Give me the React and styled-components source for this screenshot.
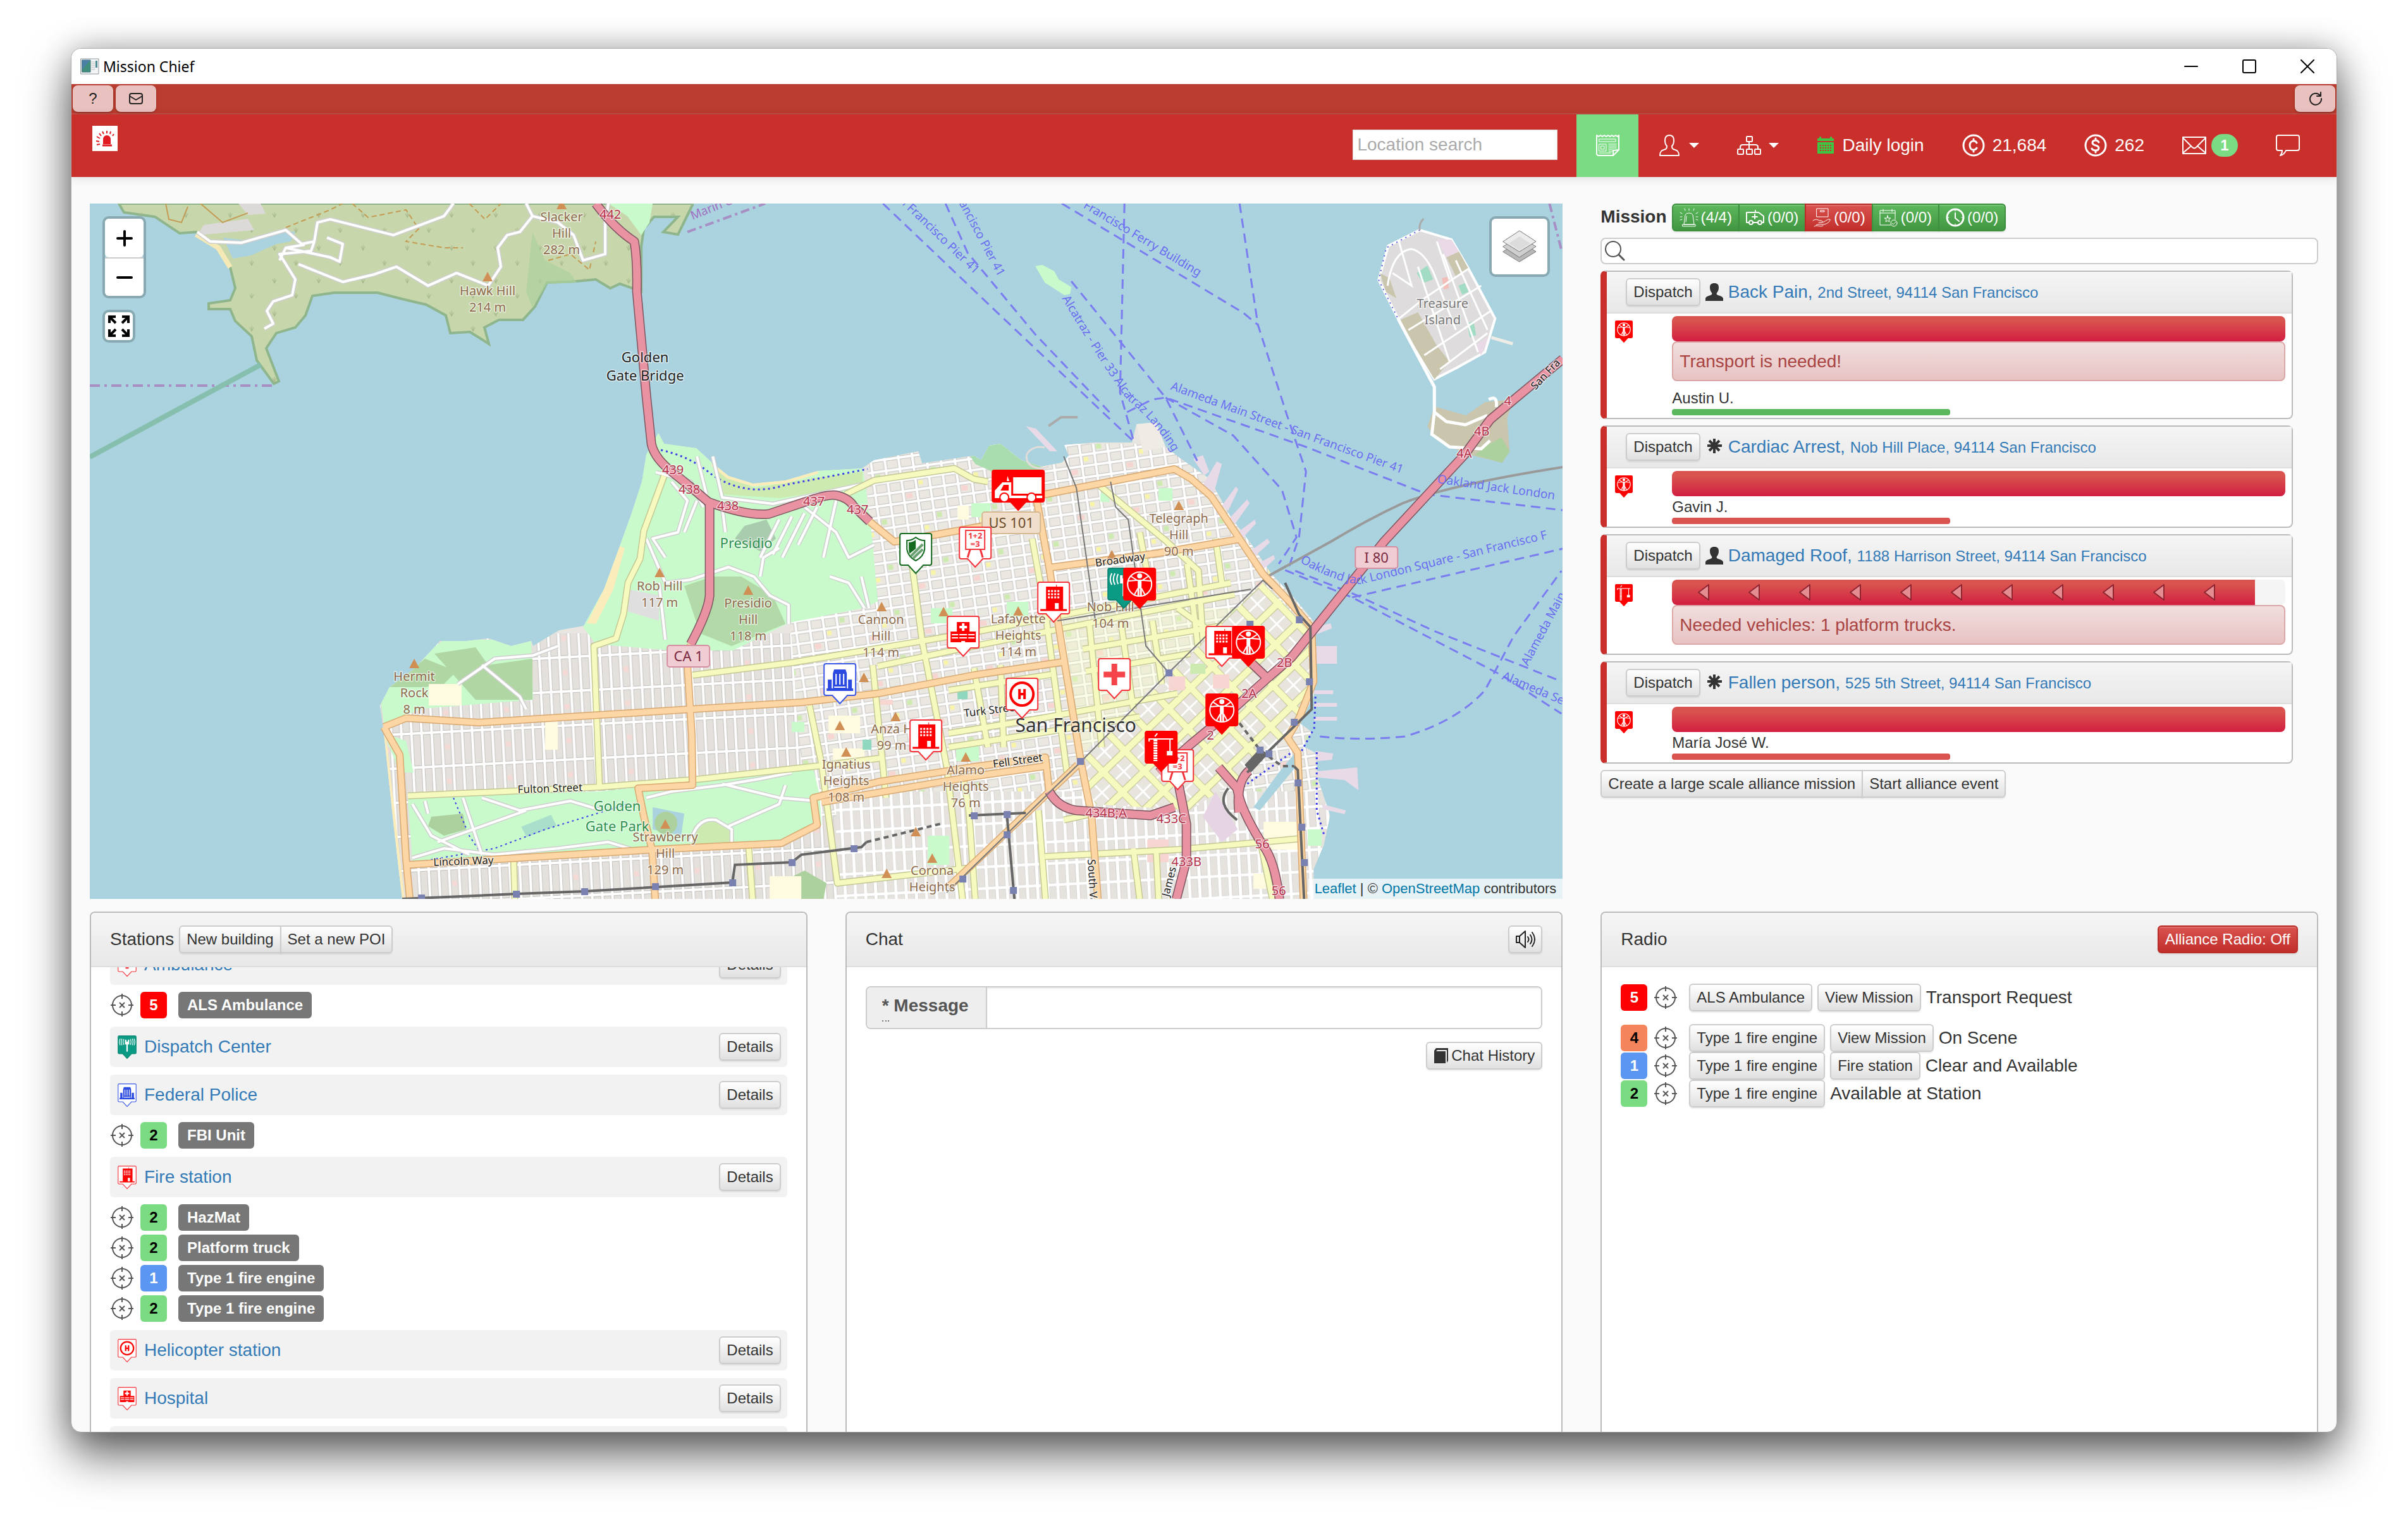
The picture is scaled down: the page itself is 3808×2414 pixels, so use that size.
import React from 'react';
import styled, { createGlobalStyle, css } from 'styled-components';

const GlobalStyle = createGlobalStyle`
  * {
    box-sizing: border-box;
  }
  body {
    margin: 0;
    background: #fff;
    color: #333;
    font-family: "Liberation Sans", Arial, sans-serif;
    font-size: 28px;
    line-height: 40px;
  }
  a {
    color: #337ab7;
    text-decoration: none;
  }
  button,
  input {
    font-family: inherit;
  }
  svg {
    display: block;
    flex: none;
  }
`;

/* ---------- window frame ---------- */

const Desktop = styled.div`
  height: 100vh;
  padding: 76px 112px 148px;
`;

const Window = styled.div`
  display: flex;
  flex-direction: column;
  height: 100%;
  overflow: hidden;
  background: #fafafa;
  border: 1px solid #aaa;
  border-radius: 16px;
  box-shadow: 0 36px 72px rgba(0, 0, 0, 0.6), 0 0 48px rgba(0, 0, 0, 0.24);
`;

const TitleBar = styled.div`
  display: flex;
  align-items: center;
  flex: none;
  height: 56px;
  padding-left: 14px;
  background: #fff;
  color: #000;
  font-family: "Noto Sans", sans-serif;
  font-size: 23px;
`;

const Title = styled.div`
  flex: 1;
  padding-left: 6px;
`;

const WindowButton = styled.button`
  display: flex;
  align-items: center;
  justify-content: center;
  width: 92px;
  height: 56px;
  padding: 0;
  border: 0;
  background: none;
`;

const Toolbar = styled.div`
  display: flex;
  flex: none;
  gap: 4px;
  height: 48px;
  padding: 2px;
  background: #ba3c2e;
  border-bottom: 2px solid #c05046;
`;

const ToolButton = styled.button`
  display: flex;
  align-items: center;
  justify-content: center;
  width: 64px;
  height: 42px;
  margin-left: ${(props) => (props.$end ? 'auto' : '0')};
  padding: 0;
  border: 0;
  border-radius: 8px;
  background: #e9c2bf;
  box-shadow: 0 1px 3px rgba(0, 0, 0, 0.3);
  color: #222;
  font-size: 24px;
`;

/* ---------- nav ---------- */

const Nav = styled.nav`
  display: flex;
  align-items: center;
  flex: none;
  height: 99px;
  padding: 0 28px 0 33px;
  background: #c9302c;
  box-shadow: 0 2px 14px rgba(0, 0, 0, 0.12);
  color: #fff;
`;

const Logo = styled.a`
  display: block;
  align-self: flex-start;
  margin: 18px auto 0 0;
`;

const LocationSearch = styled.input`
  width: 324px;
  height: 48px;
  margin: 0 30px 4px 0;
  padding: 0 6px;
  border: 1px solid #ddd;
  background: #fff;
  font-size: 28px;
  &::placeholder {
    color: #aaa;
  }
`;

const NavItem = styled.a`
  display: flex;
  align-items: center;
  gap: 12px;
  height: 100%;
  padding: 0 30px 2px;
  color: #fff;
  background: ${(props) => (props.$active ? '#7adb82' : 'none')};
`;

const Caret = styled.span`
  border-top: 8px solid #fff;
  border-left: 8px solid transparent;
  border-right: 8px solid transparent;
`;

const CountBadge = styled.span`
  min-width: 42px;
  height: 36px;
  margin-left: -4px;
  border-radius: 18px;
  background: #7adb82;
  font-size: 24px;
  font-weight: bold;
  line-height: 36px;
  text-align: center;
`;

/* ---------- shared parts ---------- */

const Main = styled.main`
  display: grid;
  grid-template-columns: repeat(3, minmax(0, 1fr));
  grid-template-rows: 1100px minmax(0, 1fr);
  flex: 1;
  min-height: 0;
  gap: 20px 60px;
  padding: 42px 29px 0;
`;

const tones = {
  plain: css`
    color: #333;
    border-color: #ccc;
    background: linear-gradient(#fff, #e0e0e0);
  `,
  green: css`
    color: #fff;
    border-color: #3e8f3e;
    background: linear-gradient(#5cb85c, #419641);
  `,
  red: css`
    color: #fff;
    border-color: #b92c28;
    background: linear-gradient(#d9534f, #c12e2a);
  `,
};

const Button = styled.button`
  display: inline-flex;
  align-items: center;
  gap: 4px;
  height: 44px;
  padding: 0 10px;
  border: 2px solid;
  border-radius: 6px;
  font-size: 24px;
  line-height: 36px;
  white-space: nowrap;
  box-shadow: inset 0 2px 0 rgba(255, 255, 255, 0.15), 0 2px 2px rgba(0, 0, 0, 0.08);
  ${(props) => tones[props.$tone || 'plain']}
`;

const ButtonGroup = styled.div`
  display: flex;
  & > button:not(:first-child) {
    margin-left: -2px;
    border-top-left-radius: 0;
    border-bottom-left-radius: 0;
  }
  & > button:not(:last-child) {
    border-top-right-radius: 0;
    border-bottom-right-radius: 0;
  }
`;

const Panel = styled.section`
  display: flex;
  flex-direction: column;
  min-height: 0;
  border: 2px solid #bbb;
  border-bottom: 0;
  border-radius: 8px 8px 0 0;
  background: #fff;
`;

const PanelHeader = styled.header`
  display: flex;
  align-items: center;
  justify-content: ${(props) => (props.$spread ? 'space-between' : 'flex-start')};
  flex: none;
  gap: 8px;
  height: 86px;
  padding: 0 30px;
  border-bottom: 2px solid #ddd;
  border-radius: 6px 6px 0 0;
  background: linear-gradient(#f5f5f5, #e8e8e8);
`;

const PanelBody = styled.div`
  flex: 1;
  min-height: 0;
  padding: 0 30px;
  overflow: hidden;
`;

const statusColors = {
  1: ['#5a96f2', '#fff'],
  2: ['#7adb82', '#000'],
  4: ['#f4845c', '#000'],
  5: ['#ff0000', '#fff'],
};

const Status = styled.span`
  width: 42px;
  height: 42px;
  border-radius: 6px;
  background: ${(props) => statusColors[props.$code][0]};
  color: ${(props) => statusColors[props.$code][1]};
  font-size: 24px;
  font-weight: bold;
  line-height: 42px;
  text-align: center;
`;

/* ---------- missions ---------- */

const Missions = styled.section`
  display: flex;
  flex-direction: column;
  gap: 10px;
`;

const MissionFilter = styled.div`
  display: flex;
  gap: 8px;
  font-weight: bold;
  line-height: 42px;
`;

const MissionSearch = styled.label`
  display: flex;
  align-items: center;
  height: 42px;
  padding-left: 4px;
  border: 2px solid #ccc;
  border-radius: 8px;
  background: #fff;
`;

const SearchInput = styled.input`
  flex: 1;
  height: 36px;
  border: 0;
  outline: 0;
  background: none;
  font-size: 24px;
`;

const MissionList = styled.div`
  display: flex;
  flex-direction: column;
  gap: 10px;
  margin-right: 40px;
`;

const Card = styled.article`
  border: 2px solid #bbb;
  border-left: 10px solid #c9302c;
  border-radius: 8px;
  background: #fff;
`;

const CardHeader = styled.header`
  display: flex;
  align-items: center;
  gap: 8px;
  height: 66px;
  padding: 0 30px;
  border-bottom: 2px solid #ddd;
  background: linear-gradient(#f5f5f5, #e8e8e8);
`;

const Address = styled.small`
  font-size: 24px;
`;

const CardBody = styled.div`
  display: grid;
  grid-template-columns: 90px minmax(0, 1fr);
  padding: 4px 10px 4px 13px;
`;

const CardPin = styled.div`
  padding-top: 7px;
`;

const Track = styled.div`
  height: 40px;
  border-radius: 8px;
  background: #f5f5f5;
  overflow: hidden;
`;

const Fill = styled.div`
  display: flex;
  align-items: center;
  gap: 60px;
  height: 100%;
  padding-left: 40px;
  background: linear-gradient(#d9534f 20%, #d21e40);
`;

const Alert = styled.div`
  height: 63px;
  margin-bottom: 10px;
  padding: 0 10px;
  border: 2px solid #dca7a7;
  border-radius: 8px;
  background: linear-gradient(#f2dede, #e7c3c3);
  color: #a94442;
  line-height: 59px;
`;

const PatientName = styled.div`
  font-size: 24px;
  line-height: 34px;
`;

const Health = styled.div`
  width: 440px;
  height: 10px;
  border-radius: 4px;
  background: ${(props) => (props.$good ? '#5cb85c' : '#d9534f')};
`;

/* ---------- stations, chat, radio ---------- */

const StationList = styled.div`
  /* the list is scrolled a little way down */
  margin-top: -36px;
`;

const StationRow = styled.div`
  display: flex;
  align-items: center;
  gap: 12px;
  height: 64px;
  margin-bottom: 12px;
  padding: 0 10px 0 12px;
  border-radius: 6px;
  background: #f2f2f2;
  & > button {
    margin-left: auto;
  }
`;

const Vehicles = styled.div`
  display: flex;
  flex-direction: column;
  gap: 6px;
  margin: -1px 0 13px;
`;

const Vehicle = styled.div`
  display: flex;
  align-items: center;
  gap: 10px;
  height: 42px;
`;

const VehicleLabel = styled.a`
  height: 42px;
  margin-left: 8px;
  padding: 0 14px;
  border-radius: 6px;
  background: #777;
  color: #fff;
  font-size: 24px;
  font-weight: bold;
  line-height: 42px;
`;

const ChatBody = styled(PanelBody)`
  display: flex;
  flex-direction: column;
  align-items: flex-end;
  gap: 20px;
  padding-top: 30px;
`;

const InputGroup = styled.div`
  display: flex;
  width: 100%;
  height: 68px;
  border: 2px solid #ccc;
  border-radius: 8px;
  overflow: hidden;
`;

const Addon = styled.label`
  flex: none;
  width: 190px;
  padding: 0 24px;
  border-right: 2px solid #ccc;
  background: #eee;
  color: #555;
  font-weight: bold;
  line-height: 58px;
`;

const Required = styled.abbr`
  padding-bottom: 8px;
  border-bottom: 2px dotted #777;
  text-decoration: none;
`;

const MessageInput = styled.input`
  flex: 1;
  border: 0;
  box-shadow: inset 0 2px 2px rgba(0, 0, 0, 0.08);
  font-size: 28px;
`;

const SoundButton = styled(Button)`
  width: 54px;
  justify-content: center;
`;

const RadioBody = styled(PanelBody)`
  padding-top: 26px;
`;

const RadioRow = styled.div`
  display: flex;
  align-items: center;
  gap: 8px;
  height: 44px;
  margin-bottom: ${(props) => (props.$request ? '20px' : '0')};
`;

const RadioTarget = styled.span`
  padding: 0 10px 0 2px;
`;

/* ---------- map ---------- */

const MapFrame = styled.section`
  position: relative;
  grid-column: span 2;
  overflow: hidden;
  background: #aad3df;
`;

const MapCanvas = styled.svg`
  width: 100%;
  height: 100%;
`;

const ControlBox = styled.div`
  position: absolute;
  display: flex;
  flex-direction: column;
  border: 4px solid rgba(0, 0, 0, 0.2);
  border-radius: 10px;
  background-clip: padding-box;
`;

const ZoomBox = styled(ControlBox)`
  top: 20px;
  left: 20px;
`;

const FullscreenBox = styled(ControlBox)`
  top: 168px;
  left: 20px;
`;

const LayersBox = styled(ControlBox)`
  top: 20px;
  right: 20px;
`;

const MapButton = styled.button`
  display: flex;
  align-items: center;
  justify-content: center;
  width: ${(props) => props.$size}px;
  height: ${(props) => props.$size}px;
  padding: 0;
  border: 0;
  border-radius: 6px;
  background: #fff;
  & + & {
    border-top: 2px solid #ccc;
    border-radius: 0 0 6px 6px;
  }
`;

const Attribution = styled.div`
  position: absolute;
  right: 0;
  bottom: 0;
  padding: 0 10px;
  background: rgba(255, 255, 255, 0.7);
  font-size: 22px;
  line-height: 32px;
  a {
    color: #0078a8;
  }
`;

/* ---------- icons ---------- */

const Icon = ({ w, h, box, children, stroke = 'currentColor', sw = 2, fill = 'none' }) => (
  <svg
    width={w}
    height={h}
    viewBox={box || `0 0 ${w} ${h}`}
    fill={fill}
    stroke={stroke}
    strokeWidth={sw}
    strokeLinejoin="round"
    strokeLinecap="round"
    aria-hidden="true"
  >
    {children}
  </svg>
);

const AppIcon = () => (
  <Icon w={30} h={26} sw={1}>
    <rect x="1" y="1" width="28" height="24" fill="#f3f5f6" stroke="#8d979c" />
    <rect x="3" y="3" width="13" height="19" fill="#3f8f7c" stroke="#47717c" />
    <path d="M3 3h13L3 18z" fill="#4b7fa6" stroke="none" />
    <path d="M18 6h5M18 9h5M18 12h5M18 15h5M18 18h5" stroke="#b4babd" />
    <rect x="24" y="4" width="3" height="11" fill="#4d8c94" stroke="none" />
  </Icon>
);

const LogoIcon = () => (
  <Icon w={40} h={40} stroke="#e11b22" sw={3}>
    <rect width="40" height="40" fill="#fff" stroke="none" />
    <path d="M17 29V21a6 6 0 0 1 12 0v8z" fill="#e11b22" stroke="none" />
    <path d="M16 31h15" strokeLinecap="butt" />
    <path d="M12 29l-5 1M11 25l-5-1M12 20l-5-3M14 16l-3-4M18 13l-2-4M23 12V8M28 13l1-4M32 16l2-3" strokeLinecap="butt" strokeWidth="2" />
  </Icon>
);

const NewsIcon = () => (
  <Icon w={38} h={36} sw={2}>
    <path d="M2 2l3 2 3-2 3 2 3-2 3 2 3-2 3 2 3-2 3 2 3-2 3 2 2-2v23l-9 9H4l-2-2z" />
    <path d="M28 34v-8l9-1" />
    <rect x="6" y="8" width="26" height="4" strokeWidth="1" />
    <rect x="6" y="16" width="11" height="11" strokeWidth="1" />
    <rect x="9" y="19" width="5" height="5" strokeWidth="1" />
    <path d="M21 16h12M21 19h12M21 22h12M21 25h6M21 28h5M6 30h18" strokeWidth="1" />
  </Icon>
);

const UserIcon = () => (
  <Icon w={38} h={34} sw={2}>
    <path d="M4 33c0-6 2-8 6-9 4-1 5-2 5-6-2-2-3-5-3-9 0-5 2-8 7-8s7 3 7 8c0 4-1 7-3 9 0 4 1 5 5 6 4 1 6 3 6 9z" />
  </Icon>
);

const TreeIcon = () => (
  <Icon w={38} h={30} sw={2}>
    <rect x="15" y="1" width="9" height="8" rx="1" />
    <rect x="1" y="21" width="9" height="8" rx="1" />
    <rect x="15" y="21" width="9" height="8" rx="1" />
    <rect x="28" y="21" width="9" height="8" rx="1" />
    <path d="M19 9v12M5 21v-3c0-3 1-4 4-4h20c3 0 4 1 4 4v3" />
  </Icon>
);

const CalendarIcon = () => (
  <Icon w={28} h={30} stroke="none" fill="#3fc544">
    <path d="M1 4h3V2q2-2 3 0v2h14V2q2-2 3 0v2h3v4H1zM1 10h26v18H1z" />
    <g stroke="#c9302c" strokeWidth="2" strokeDasharray="2 2" strokeLinecap="butt">
      <path d="M5 15h20M5 19h20M5 23h20" />
    </g>
  </Icon>
);

const CoinIcon = ({ dollar }) => (
  <Icon w={36} h={36} sw={3}>
    <circle cx="18" cy="18" r="16" />
    {dollar ? (
      <path d="M23 13c-1-2-3-3-5-3-3 0-5 1-5 4 0 5 10 3 10 8 0 3-2 4-5 4s-5-1-6-3M18 7v3M18 26v3" />
    ) : (
      <path d="M23 14c-1-2-3-3-5-3-4 0-6 3-6 7s2 7 6 7c2 0 4-1 5-3M18 8v3M18 25v3" />
    )}
  </Icon>
);

const MailIcon = () => (
  <Icon w={38} h={28} sw={2}>
    <path d="M1 1h36v26H1zM1 2l15 15q3 3 6 0L37 2M1 26l13-11M37 26L24 15" />
  </Icon>
);

const BubbleIcon = () => (
  <Icon w={38} h={34} sw={2}>
    <path d="M4 1h30q3 0 3 3v18q0 3-3 3H16c-2 5-5 7-9 8 3-3 3-5 3-8H4q-3 0-3-3V4q0-3 3-3z" />
  </Icon>
);

const SirenIcon = () => (
  <Icon w={30} h={30} sw={1}>
    <path d="M7 26l2-15q1-3 6-3t6 3l2 15zM5 26h20v3H5zM11 13l-1 9M9 4L8 1M15 4V1M22 4l1-3M4 9L1 7M4 14H1M4 18l-3 1M26 9l3-2M26 14h3M26 18l3 1" />
  </Icon>
);

const AmbulanceIcon = () => (
  <Icon w={30} h={30} sw={2}>
    <path d="M4 23H1V7h19l8 6v10h-2M11 23h8M15 7V4M14 10v7M10 14h8" />
    <circle cx="8" cy="23" r="3" />
    <circle cx="22" cy="23" r="3" />
  </Icon>
);

const HandIcon = () => (
  <Icon w={30} h={30} sw={1}>
    <rect x="7" y="1" width="18" height="13" />
    <path d="M13 4h6v2h-6zM1 20c6-4 8 0 12 0 4 0 4 3 0 3h-3M15 23c6-1 8-6 13-5 1 3-6 9-13 8-3 0-6-1-9 1M3 29c5-3 10 2 14-1" />
  </Icon>
);

const EventIcon = () => (
  <Icon w={30} h={30} sw={1}>
    <path d="M18 27H1V4h24v14M1 8h24M6 2v4M20 2v4M13 12l1 4h4l-3 2 1 4-3-2-3 2 1-4-3-2h4z" />
    <circle cx="23" cy="24" r="5" />
    <path d="M20 24l2 2 4-4" />
  </Icon>
);

const ClockIcon = () => (
  <Icon w={30} h={30} sw={3}>
    <circle cx="15" cy="15" r="13" />
    <path d="M15 8v8l6 5" strokeWidth="2" />
    <path d="M15 3v2M15 25v2M3 15h2M25 15h2" strokeWidth="1" />
  </Icon>
);

const SearchIcon = () => (
  <Icon w={34} h={34} stroke="#555" sw={2}>
    <circle cx="14" cy="14" r="12" />
    <path d="M23 23l8 8" strokeWidth="3" />
  </Icon>
);

const PersonIcon = () => (
  <Icon w={28} h={28} stroke="none" fill="#333">
    <path d="M0 28v-4c1-3 5-4 8-5 3-1 3-3 1-5-1-2-2-4-2-7 0-5 2-7 7-7s7 2 7 7c0 3-1 5-2 7-2 2-2 4 1 5 3 1 7 2 8 5v4z" />
  </Icon>
);

const AsteriskIcon = () => (
  <Icon w={28} h={28} stroke="#333" sw={4}>
    <path d="M14 1v23M3 12h23M6 4l16 16M22 4L6 20" strokeLinecap="butt" />
  </Icon>
);

const CrosshairIcon = () => (
  <Icon w={38} h={38} stroke="#555" sw={2}>
    <circle cx="19" cy="19" r="15" />
    <path d="M19 1v8M19 29v8M1 19h8M29 19h8M15 15l8 8M23 15l-8 8" strokeLinecap="butt" />
  </Icon>
);

const SoundIcon = () => (
  <Icon w={32} h={28} stroke="#222" sw={2}>
    <path d="M2 9h5l9-8v26l-9-8H2zM7 9v10" />
    <path d="M20 10q3 4 0 8M24 7q5 7 0 14M27 3q8 11 0 22" />
  </Icon>
);

const BookIcon = () => (
  <Icon w={24} h={26} stroke="none" fill="#333">
    <path d="M1 5l3-4h19v20l-2 3V4H6L4 6h15v19H1z" />
  </Icon>
);

const LayersIcon = () => (
  <Icon w={54} h={52} sw={1} stroke="#777">
    <path d="M1 34l26-17 26 17-26 16z" fill="#b8b8b8" />
    <path d="M1 26l26-16 26 16-26 17z" fill="#cfcfcf" />
    <path d="M1 18L27 1l26 17-26 16z" fill="#ececec" />
    <path d="M10 21l17-11 17 11-17 11z" fill="#dcdcdc" stroke="none" />
  </Icon>
);

const FullscreenIcon = () => (
  <Icon w={36} h={36} stroke="#000" sw={4}>
    <g strokeLinejoin="miter" strokeLinecap="butt">
      <path d="M3 13V3h10M3 3l10 10M23 3h10v10M33 3L23 13M3 23v10h10M3 33l10-10M33 23v10H23M33 33L23 23" />
    </g>
  </Icon>
);

/* ---------- pins ---------- */

// Each glyph is drawn on the 52 x 52 plate of a pin.
const glyphs = {
  body: (
    <g fill="none" stroke="#fff" strokeWidth="2">
      <circle cx="26" cy="26" r="19" />
      <path d="M8 21l13-1h10l13 1M11 13l11 7M41 13l-11 7M23 33l-6 11M29 33l6 11" />
      <path d="M26 19v14" strokeWidth="6" />
      <path d="M24 32v12M28 32v12" strokeWidth="3" />
      <circle cx="26" cy="13" r="3" fill="#fff" />
    </g>
  ),
  fire: (
    <g>
      <path d="M14 8h16V5h1v3h10v37h-7V34h-6v11H14z" fill="red" />
      <path d="M5 45h42" stroke="red" strokeWidth="3" />
      <path d="M17 15h20M17 20h20M17 25h20" stroke="#fff" strokeWidth="3" strokeDasharray="3 2" />
    </g>
  ),
  hospital: (
    <g>
      <path d="M16 10h20v15h10v17H6V25h10z" fill="red" />
      <path d="M26 12v12M20 18h12" stroke="#fff" strokeWidth="4" />
      <path d="M8 30h10M8 35h10M34 30h10M34 35h10M20 30h12M20 35h12M23 41h6" stroke="#fff" strokeWidth="2" />
    </g>
  ),
  cross: <path d="M26 9v34M9 26h34" stroke="#f5454b" strokeWidth="9" />,
  heli: (
    <g fill="none" stroke="red">
      <circle cx="26" cy="26" r="18" strokeWidth="4" />
      <path d="M22 18v16M30 18v16M22 26h8" strokeWidth="4" />
    </g>
  ),
  police: (
    <g fill="#2a49e0">
      <path d="M17 10h18l2 6v24H15V16zM7 26h6v14H7zM39 26h6v14h-6zM5 40h42v4H5z" />
      <path d="M20 17v17M26 17v17M32 17v17M17 38h18" stroke="#fff" strokeWidth="2" />
    </g>
  ),
  shield: (
    <g>
      <path d="M12 12q8 0 14-5 6 5 14 5v14q-2 12-14 18-12-6-14-18z" fill="#fff" stroke="#146b20" strokeWidth="2" />
      <path d="M15 15q6 0 11-4v14l-10 8q-1-4-1-8z" fill="#146b20" />
      <path d="M18 37l19-19M22 40l15-14" stroke="#6ba273" strokeWidth="4" />
    </g>
  ),
  school: (
    <g fill="none" stroke="#f0353c" strokeWidth="2">
      <rect x="11" y="6" width="30" height="30" />
      <path d="M18 36l-4 13M34 36l4 13" strokeWidth="3" />
      <text x="26" y="19" fill="#f0353c" stroke="none" fontSize="13" fontWeight="bold" textAnchor="middle">1+2</text>
      <text x="26" y="32" fill="#f0353c" stroke="none" fontSize="13" fontWeight="bold" textAnchor="middle">=3</text>
    </g>
  ),
  dispatch: (
    <g fill="none" stroke="#fff" strokeWidth="2">
      <path d="M26 17v28M22 12v11h8V12" strokeWidth="4" />
      <path d="M17 10q-4 8 0 16M12 9q-5 9 0 18M7 9q-5 9 0 18M35 10q4 8 0 16M40 9q5 9 0 18M45 9q5 9 0 18" />
    </g>
  ),
  crane: (
    <g fill="none" stroke="#fff" strokeWidth="3">
      <path d="M7 17v-4h38M16 9l4-5" strokeWidth="2" />
      <path d="M17 14v34" strokeWidth="6" strokeDasharray="3 1" />
      <path d="M40 13v19" strokeWidth="2" />
      <rect x="35" y="32" width="9" height="7" fill="#fff" stroke="none" />
    </g>
  ),
  truck: (
    <g fill="#fff">
      <path d="M34 12h45v26H34zM17 20h14v21h49v4H5V33z" />
      <path d="M19 24h8v9H14z" fill="red" />
      <path d="M24 18l1-8 3 8z" />
      <circle cx="20" cy="44" r="7" stroke="red" strokeWidth="2" />
      <circle cx="63" cy="44" r="7" stroke="red" strokeWidth="2" />
    </g>
  ),
};

const plates = {
  body: ['red', 'red'],
  crane: ['red', 'red'],
  truck: ['red', 'red'],
  dispatch: ['#0b9b84', '#0b8472'],
  police: ['#fff', '#3a57e8'],
  shield: ['#fff', '#146b20'],
};

const PinShape = ({ kind }) => {
  const [fill, stroke] = plates[kind] || ['#fff', '#f5333a'];
  const w = kind === 'truck' ? 84 : 52;
  const c = w / 2;
  return (
    <g>
      <path
        d={`M4 1H${w - 4}q3 0 3 3v44q0 3-3 3H${c + 12}L${c} 64 ${c - 12} 51H4q-3 0-3-3V4q0-3 3-3z`}
        fill={fill}
        stroke={stroke}
        strokeWidth="2"
      />
      {glyphs[kind]}
    </g>
  );
};

const PinIcon = ({ kind, w }) => (
  <svg width={w} height={w + 7} viewBox="0 0 52 65" aria-hidden="true">
    <PinShape kind={kind} />
  </svg>
);

const pins = [
  ['shield', 1306, 583],
  ['school', 1400, 573],
  ['fire', 1524, 660],
  ['hospital', 1381, 714],
  ['police', 1186, 789],
  ['fire', 1322, 878],
  ['cross', 1620, 781],
  ['heli', 1474, 812],
  ['dispatch', 1635, 638],
  ['body', 1660, 638],
  ['fire', 1790, 730],
  ['body', 1832, 730],
  ['body', 1790, 837],
  ['school', 1720, 925],
  ['crane', 1694, 896],
  ['truck', 1468, 483],
];

/* ---------- map data ---------- */

const SF =
  'M494 1100L481 988 465 838 459 794 474 765 513 736 554 692 596 692 631 688 666 700 698 692 701 700 742 675 781 668 813 610 838 542 857 489 873 440 880 397 899 363 908 380 959 387 985 411 1010 431 1049 443 1100 438 1151 423 1221 419 1240 406 1310 392 1316 411 1398 399 1409 406 1422 383 1440 380 1473 406 1505 416 1537 410 1548 399 1541 382 1587 378 1648 378 1655 349 1686 346 1701 385 1724 403 1770 435 1804 496 1836 538 1868 586 1900 619 1935 661 1938 708 1935 779 1913 822 1932 836 1919 859 1938 869 1942 911 1961 968 1951 1015 1935 1053 1935 1100z';

const MARIN =
  'M46 0L54 14 103 21 142 47 168 45 203 68 222 101 230 134 222 153 188 158 188 167 222 167 230 186 256 210 264 248 291 285 299 281 279 229 295 205 325 196 341 177 352 146 387 141 455 141 494 151 532 160 563 177 570 205 601 203 631 222 624 196 647 184 685 184 704 163 723 125 769 123 800 120 823 134 838 127 872 139 872 68 876 40 892 21 930 21 907 45 930 49 953 2 953 0z';

const secondary = [
  'M908 431L876 518 870 562 851 600 844 649 832 688 797 700 806 926',
  'M503 937L806 923 959 911 1157 889 1253 877',
  'M953 746L1112 726 1316 692 1398 678 1804 600',
  'M1246 732L1398 700 1810 618',
  'M1195 460L1240 438 1367 419 1398 436 1420 440',
  'M1297 547L1316 692 1355 891 1380 1100',
  'M1138 794L1157 886 1182 1075 1398 1050',
  'M1238 730L1259 940',
  'M1594 444L1702 534 1753 581 1760 690',
  'M1490 530L1510 640 1545 900',
  'M1660 520L1675 600M1735 570L1745 640 1752 700M1780 530L1790 600',
  'M1358 838L1500 815 1720 775M1358 860L1500 838 1660 812',
  'M1398 735L1420 860M1580 660L1600 860M1630 660L1650 800M1680 660L1695 760',
  'M1358 770L1520 745M1440 730L1445 860',
  'M1500 960L1511 1100M1400 1100L1390 960 1380 900',
  'M1540 975L1600 962M1510 1033L1720 1022 1910 1005',
  'M1686 1020L1690 1100M1650 1020L1660 1100M1850 1005L1870 1100M1042 1020L1048 1100M670 1030L672 1100',
  'M1570 705L1790 668M1575 740L1740 712M1720 640L1790 690',
];

const primary = [
  'M950 697L945 731 952 843 953 920 867 925 876 969 889 1022 894 1100',
  'M1233 503L1272 535 1342 523 1495 495',
  'M1495 458L1517 576 1543 737 1568 888 1584 968 1594 1100',
  'M1500 462L1715 420 1741 435 1773 463 1855 586 1900 633 1932 671 1935 756 1913 812 1894 845 1910 869 1919 1100',
  'M1517 576L1690 553 1817 531',
  'M465 828L500 814 615 821 806 809 1125 789 1246 775 1398 746 1540 725',
  'M465 828L490 872 500 1037 506 1100',
  'M503 1046L889 1022 1093 1012 1150 983 1144 940 1246 915 1398 891 1511 876 1517 930',
  'M1157 947L1398 906 1511 890',
  'M1358 1081L1562 888',
];

const motorway = [
  'M800 0Q830 40 861 60 866 90 865 139L880 304 888 380Q892 400 915 420L946 445 978 472Q1040 495 1074 491L1131 472Q1170 458 1182 462 1200 466 1208 479L1233 503',
  'M980 472V620Q978 645 950 697',
  'M1690 900L1741 855 1804 803 1862 751 1900 718 2047 534 2174 397 2214 342 2252 310 2329 246',
  'M1517 930Q1530 955 1560 960L1677 968 1715 955M1722 921L1734 982 1734 1039 1718 1100',
  'M1785 892L1814 925Q1820 960 1855 1015 1874 1040 1881 1100',
  'M1833 897Q1812 915 1817 963M1838 728L1862 751',
];

const minor = [
  'M170 45L190 60 240 62 310 42 335 64 355 60 360 30 380 25 440 40 480 50 560 20 575 0',
  'M355 60L350 75 300 80 325 120 320 145 290 155 280 170 290 190 276 198M330 96L400 124 450 112 485 100 535 130 580 110 630 130 650 100 645 70 660 50 680 45 700 20 690 0',
  'M300 90L310 70 380 85 395 92 400 64 375 54M340 65L310 70M700 20L740 30 765 50 780 90 815 80 815 30 820 0',
  'M895 425L950 440 970 480M920 440L945 470 930 520 890 530 910 560M940 520L960 470',
  'M880 530L910 600 950 595 1010 575 1050 590 1075 620 1105 635V665M900 600L910 690',
  'M1130 480L1180 520 1200 560 1240 540M1180 470L1160 560M1220 590L1232 640',
  'M1000 480L1005 520M1090 500L1060 560M1110 495L1080 555M1130 490L1095 560M1060 590L1065 560 1090 545M1150 480L1120 540M1170 590L1200 600 1225 640',
  'M985 400L1000 465 1080 475 1240 440M960 400L975 460',
  'M582 760L640 720 700 715 740 700M620 730L680 780 690 800',
  'M510 950L540 1000 600 1030M530 945L535 965M590 940L620 1030M620 940L680 960 760 945 810 960M510 1035L560 1020 640 1030 740 1020 820 1010 860 1022M550 1010L690 960',
  'M880 940L920 930 1000 920 1060 910 1110 900M950 1010Q960 970 990 975L1015 990V1012M1010 985L1090 950 1100 920M1000 918L1090 940 1150 945',
];

const ferries = [
  'M1254 0L1426 164 1648 374',
  'M1353 0L1388 78 1495 207 1617 335',
  'M1537 0L1824 173 1847 192',
  'M1636 0L1629 299 1650 374',
  'M1818 0L1847 192 1893 335 1923 424 1912 528 1894 581',
  'M1552 123L1701 307 1751 407',
  'M1640 330L1680 310 1701 307 1923 385 2115 460 2329 485',
  'M1701 307L1808 367 1885 453 1908 528 1880 570',
  'M1906 581L2002 619 2123 675 2327 756',
  'M1890 580L1996 623 2232 746 2327 807',
  'M1996 623L2329 546',
  'M1945 843Q2010 850 2079 843 2160 820 2206 770L2251 685 2327 581',
];

const peaks = [
  ['Slacker|Hill|282 m', 746, 28],
  ['Hawk Hill|214 m', 629, 145],
  ['Rob Hill|117 m', 901, 612],
  ['Presidio|Hill|118 m', 1041, 639],
  ['Cannon|Hill|114 m', 1251, 665],
  ['Hermit|Rock|8 m', 513, 755],
  ['Strawberry|Hill|129 m', 910, 1009],
  ['Ignatius|Heights|108 m', 1196, 894],
  ['Anza H|99 m', 1268, 838],
  ['Alamo|Heights|76 m', 1385, 903],
  ['Corona|Heights', 1332, 1062],
  ['Lafayette|Heights|114 m', 1468, 664],
  ['Nob Hill|104 m', 1614, 645],
  ['Telegraph|Hill|90 m', 1722, 505],
];

const exits = [
  ['442', 823, 24],
  ['439', 922, 428],
  ['438', 948, 459],
  ['438', 1009, 485],
  ['437', 1145, 478],
  ['437', 1214, 491],
  ['2B', 1889, 733],
  ['2A', 1833, 782],
  ['2', 1772, 848],
  ['434B;A', 1607, 971],
  ['433C', 1710, 980],
  ['433B', 1734, 1048],
  ['56', 1854, 1020],
  ['56', 1880, 1094],
  ['4A', 2173, 402],
  ['4B', 2201, 367],
  ['4', 2242, 319],
];

const streets = [
  ['Fulton Street', 728, 931, -2],
  ['Lincoln Way', 591, 1046, -2],
  ['Broadway', 1630, 569, -8],
  ['Turk Street', 1426, 807, -7],
  ['Fell Street', 1468, 887, -8],
  ['South Van', 1580, 1078, 87],
  ['James', 1712, 1074, -76],
  ['San Fra', 2306, 274, -47],
];

const triangles = [
  [746, 2], [629, 116], [901, 584], [1041, 612], [1252, 638], [1350, 646], [513, 728], [910, 982],
  [1224, 750], [1186, 826], [1196, 868], [1274, 812], [1385, 876], [1332, 1036], [1260, 1060],
  [1468, 645], [1616, 556], [1722, 478], [1306, 994],
];

const stationsOnLine = [
  [524, 1098], [674, 1092], [782, 1088], [894, 1080], [1016, 1074], [1110, 1042], [1208, 1020],
  [1398, 968], [1450, 966], [1450, 998], [1380, 1068], [1460, 1086], [1566, 882], [1706, 742],
  [1834, 665], [1912, 658], [1928, 756], [1904, 820], [1850, 864], [1864, 870], [1910, 916],
  [1916, 986], [1920, 1042],
];

const patches = [
  ['#f7d5d0', 1706, 748, 26, 22], ['#f7d5d0', 1776, 745, 26, 22], ['#cdebb0', 1740, 728, 24, 16],
  ['#c8facc', 1450, 630, 34, 24], ['#c8facc', 1330, 640, 34, 24], ['#c8facc', 1370, 856, 36, 26],
  ['#8fd8bf', 1372, 762, 16, 22], ['#fffbe0', 1372, 478, 18, 22], ['#c8facc', 1394, 474, 30, 22],
  ['#fffbe0', 536, 760, 52, 34], ['#fffbe0', 720, 818, 20, 46], ['#fffbe0', 1168, 810, 50, 28],
  ['#fffbe0', 1175, 862, 50, 20], ['#c8facc', 1110, 820, 20, 16], ['#8fd8bf', 1222, 848, 14, 16],
  ['#fffbe0', 1856, 978, 54, 44], ['#c8facc', 1926, 990, 22, 26], ['#fffbe0', 1840, 1060, 20, 24],
  ['#f7d5d0', 1672, 1006, 34, 36], ['#f7d5d0', 1240, 785, 30, 8], ['#fffbe0', 1075, 1064, 50, 36],
  ['#c8facc', 1325, 1000, 34, 46], ['#c8facc', 1690, 450, 22, 20], ['#c8facc', 1598, 458, 14, 14],
];

const piers = [
  'M1480 352L1496 356 1530 392 1518 392zM1745 404L1760 398 1770 424 1762 430zM1757 450L1782 408 1790 412 1774 470z',
  'M1790 478L1812 448 1816 452 1800 486zM1800 500L1830 468 1834 474 1810 508zM1815 520L1842 500 1844 506 1822 530z',
  'M1832 552L1862 530 1866 536 1840 560zM1846 570L1872 556 1874 562 1854 580zM1936 670L1962 664 1964 672 1938 682z',
  'M1938 700H1972V728H1938zM1936 770H1966V776H1936zM1936 790H1972V796H1936zM1936 812H1972V818H1936z',
  'M1938 866L1966 870 1964 880 1940 882zM1940 898L2004 892 2006 928 1984 912 1942 908zM1948 950L1986 960 1984 966 1950 958z',
];

const Peak = ({ label, x, y }) => (
  <text textAnchor="middle">
    {label.split('|').map((line, i) => (
      <tspan key={line} x={x} y={y + i * 26}>{line}</tspan>
    ))}
  </text>
);

const Shield = ({ label, x, y, w, tone }) => (
  <g>
    <rect x={x} y={y} width={w} height="34" rx="4" fill={tone === 'tan' ? '#f1dfcb' : '#efcdd3'} stroke={tone === 'tan' ? '#d6b892' : '#d58fa0'} strokeWidth="2" />
    <text x={x + w / 2} y={y + 25} textAnchor="middle" fontSize="22" fill={tone === 'tan' ? '#6b4a2a' : '#7a2840'}>{label}</text>
  </g>
);

const Lines = ({ items, casing, color, width }) => (
  <g fill="none" strokeLinejoin="round">
    {items.map((d) => (
      <path key={d} d={d} stroke={casing} strokeWidth={width + 3} />
    ))}
    {items.map((d) => (
      <path key={d} d={d} stroke={color} strokeWidth={width} />
    ))}
  </g>
);

const CityMap = () => (
  <MapCanvas viewBox="0 0 2329 1100" preserveAspectRatio="xMidYMid slice" fontFamily='"Noto Sans", sans-serif' role="img" aria-label="Map of San Francisco">
    <defs>
      <pattern id="west" width="96" height="54" patternUnits="userSpaceOnUse" patternTransform="rotate(-3)">
        <rect width="96" height="54" fill="#c4c2c0" />
        {[0, 16, 32, 48, 64, 80].map((x) => (
          <rect key={x} x={x + 3} y="3" width="10" height="48" fill="#e4e1dc" />
        ))}
        <path d="M0 0H96M0 0V54M16 0V54M32 0V54M48 0V54M64 0V54M80 0V54M96 0V54M0 54H96" stroke="#fff" strokeWidth="4" />
        <path d="M36 20h8v8h-8z" fill="#f5d9d4" />
      </pattern>
      <pattern id="mid" width="88" height="72" patternUnits="userSpaceOnUse" patternTransform="rotate(-8)">
        <rect width="88" height="72" fill="#c4c2c0" />
        {[0, 18, 36, 54].map((y) =>
          [0, 22, 44, 66].map((x) => <rect key={`${x}-${y}`} x={x + 3} y={y + 3} width="16" height="12" fill="#ebe8e2" />)
        )}
        <path d="M0 0H88M0 18H88M0 36H88M0 54H88M0 72H88M0 0V72M22 0V72M44 0V72M66 0V72M88 0V72" stroke="#fff" strokeWidth="4" />
        <path d="M26 22h8v8h-8z" fill="#cdebb0" />
        <path d="M70 58h10v8H70z" fill="#f7d5d0" />
        <path d="M4 40h7v7H4z" fill="#f8f5a8" />
      </pattern>
      <pattern id="soma" width="48" height="44" patternUnits="userSpaceOnUse" patternTransform="rotate(-44)">
        <rect width="48" height="44" fill="#e8e4de" />
        <path d="M6 22H42M24 6V38" stroke="#fff" strokeWidth="3" />
        <path d="M0 0H48M0 0V44M48 0V44M0 44H48" stroke="#c3c894" strokeWidth="12" />
        <path d="M0 0H48M0 0V44M48 0V44M0 44H48" stroke="#f7fabf" strokeWidth="10" />
      </pattern>
      <pattern id="south" width="64" height="34" patternUnits="userSpaceOnUse" patternTransform="rotate(-3)">
        <rect width="64" height="34" fill="#c4c2c0" />
        {[0, 16, 32, 48].map((x) => (
          <rect key={x} x={x + 3} y="3" width="10" height="28" fill="#e6e3de" />
        ))}
        <path d="M0 0H64M0 34H64M0 0V34M16 0V34M32 0V34M48 0V34M64 0V34" stroke="#fff" strokeWidth="5" />
      </pattern>
      <pattern id="scrub" width="70" height="52" patternUnits="userSpaceOnUse">
        <path d="M12 14v8M9 16l3 6 3-6M46 38v8M43 40l3 6 3-6" stroke="#a3b58a" fill="none" />
      </pattern>
      <clipPath id="sf">
        <path d={SF} />
      </clipPath>
      <path id="ferry33" d="M1537 150Q1590 240 1640 310 1690 350 1722 410" />
      <path id="oakland" d="M1913 567Q1970 600 2010 602 2100 580 2329 524" />
    </defs>

    <rect width="2329" height="1100" fill="#aad3df" />

    {/* Marin headlands */}
    <path d={MARIN} fill="#c8d7ab" stroke="#8fb58c" strokeWidth="4" />
    <path d={MARIN} fill="url(#scrub)" />
    <path d="M211 54L245 58 300 42 325 45 318 60 295 64 255 82 226 87z" fill="#aad3df" />
    <path d="M168 49L203 70 222 101" fill="none" stroke="#f5e9b5" strokeWidth="8" />
    <path d="M700 45L720 90 760 110 770 125 723 127 700 165 690 140 695 90z" fill="#add19e" opacity="0.7" />
    <path d="M820 0H890L885 30 872 50 850 20z" fill="#c8facc" />
    <path d="M180 34L250 24 260 42 170 50zM235 0H270L278 16 250 18z" fill="#dcdad8" />
    <g fill="none" stroke="#c49a52" strokeWidth="2">
      <path d="M120 0L125 25 145 30 155 5M175 0L210 30 250 15" />
      <path d="M310 38L380 10 400 0M415 0L440 22 500 10 520 40 500 60 560 70 590 70M600 0L625 25 650 0M725 90L760 80 790 105 800 60" strokeDasharray="8 5" />
    </g>
    <path d="M0 288H291" stroke="#a78fc4" strokeWidth="4" strokeDasharray="16 7 4 7" />
    <path d="M0 401L270 255" stroke="#86bfae" strokeWidth="8" />
    <path d="M945 45L1068 0M2308 0L2327 74" stroke="#a78fc4" strokeWidth="4" strokeDasharray="14 6 4 6" />

    {/* city ground */}
    <path d={SF} fill="#e9e6e1" />
    <g clipPath="url(#sf)">
      <path d="M440 680H1180V1100H440z" fill="url(#west)" />
      <path d="M1106 640H1230V380H1960V1000H1500L1130 960z" fill="url(#mid)" />
      <path d="M1180 930H1960V1100H1180z" fill="url(#south)" />
      <path d="M1562 888L1855 600 1935 680 1940 790 1830 900 1740 960 1590 950z" fill="url(#soma)" />
      <path d="M1520 640H1815L1700 745 1560 880z" fill="#f7fabf" opacity="0.35" />
      <path d="M800 697L921 707 1017 707 1106 663 1227 639 1246 629 1237 528 1227 450 1221 410 1000 400 880 350 780 670z" fill="#c8facc" />
      <path d="M940 605L985 590 1030 590 1080 620 1100 665 1015 700 965 680z" fill="#add19e" opacity="0.8" />
      <path d="M990 420L1050 450 1140 435 1222 424V446L1090 466 1000 460z" fill="#cdebb0" />
      <path d="M1035 510L1070 500 1085 530 1060 550 1020 530z" fill="#a9cbae" />
      <path d="M850 610L900 620 900 660 850 645z" fill="#dfdfdf" />
      <path d="M503 940L806 930 1144 894 1154 935 1157 983 1093 1010 889 1020 510 1041z" fill="#c8facc" />
      <path d="M540 970L590 965 595 990 560 1000 535 985z" fill="#add19e" />
      <path d="M680 985L730 965 740 985 690 1004z" fill="#aae0cb" stroke="#c8facc" strokeWidth="3" />
      <path d="M890 955L940 965 935 1000 890 990z" fill="#aad3df" />
      <circle cx="911" cy="980" r="18" fill="#add19e" />
      <path d="M955 985L985 972 1014 990V1012L950 1014z" fill="#cdebb0" />
      <path d="M465 823L459 780 480 750 560 690 698 690 701 785 526 799z" fill="#c8facc" />
      <path d="M545 712L610 702 630 730 700 720V785L610 785 570 740zM474 765L530 720 580 740 560 760 530 765z" fill="#add19e" opacity="0.9" />
      <path d="M465 838L500 850 512 900 490 900z" fill="#c8facc" />
      <path d="M440 838H468L498 1100H440z" fill="#faecbb" />
      <path d="M838 542L813 610 786 664 800 665 828 610 846 545z" fill="#faecbb" />
      <path d="M985 411L1010 431 1049 443 1100 438 1151 423" fill="none" stroke="#faecbb" strokeWidth="9" />
      <path d="M1380 380L1500 380 1505 425 1440 430 1400 412z" fill="#a9dcae" />
      <path d="M1090 1075L1130 1055 1165 1075 1160 1100H1095z" fill="#add19e" />
      <path d="M1880 900L1905 870 1916 880 1850 960 1840 955z" fill="#aad3df" />
      <path d="M1780 930L1815 990 1790 1010 1760 970z" fill="#e6d4e4" />
      {patches.map(([fill, x, y, w, h]) => (
        <rect key={`${x}-${y}`} x={x} y={y} width={w} height={h} fill={fill} />
      ))}
    </g>
    <path d="M1510 386a22 16 0 0 0-28 20 22 16 0 0 0 34 10" fill="none" stroke="#dfdcda" strokeWidth="3" />
    <path d="M1516 352L1536 338 1562 338" fill="none" stroke="#aaa" strokeWidth="4" />
    {piers.map((d) => (
      <path key={d} d={d} fill="#e8dae6" />
    ))}
    <path d="M1655 349L1686 346 1701 385 1665 392z" fill="#efece6" />

    {/* islands */}
    <path d="M1495 99L1506 97 1525 107 1532 120 1552 132 1550 143 1541 145 1510 125z" fill="#c8facc" />
    <path d="M2103 42L2153 57 2180 103 2222 182 2206 235 2161 260 2126 278 2069 183 2038 121 2053 67z" fill="#dedcdc" stroke="#fff" strokeWidth="4" />
    <path d="M2070 185L2100 172 2130 225 2150 250 2126 278zM2145 85L2165 76 2180 103 2160 115zM2040 110L2055 118 2066 150 2050 140z" fill="#c9c6ad" />
    <path d="M2130 57L2153 57 2165 76 2145 85zM2190 225L2212 210 2200 240z" fill="#ead9e6" />
    <path d="M2098 110L2115 98 2124 120 2108 126zM2164 130l10-4 6 14-10 4zM2178 190l10-4 4 22-10 4z" fill="#a2dcc4" />
    <path d="M2138 118l9-2 2 18-8 2z" fill="#f3bfb8" />
    <g fill="none" stroke="#fff" strokeWidth="3">
      <path d="M2052 130Q2060 75 2090 72 2110 76 2125 110L2160 200M2069 183L2110 150 2180 103M2085 200L2200 130M2110 240L2215 170M2135 262L2210 205M2100 100L2150 250M2140 80L2195 235M2060 110L2090 130 2070 60M2130 60L2150 120M2160 90L2210 200" />
    </g>
    <path d="M2103 42L2050 70 2038 121 2069 183" fill="none" stroke="#5b5be6" strokeWidth="2" strokeDasharray="2 6" />
    <path d="M2126 321L2176 335 2206 314 2252 310 2241 339 2245 392 2233 410 2176 396 2130 374 2115 353z" fill="#c9c6ad" />
    <path d="M2205 385L2232 370 2245 392 2233 410 2190 398z" fill="#add19e" />
    <path d="M2069 183L2126 290V330L2145 345 2175 350 2210 335M2126 330L2122 365 2150 385 2200 388 2214 375M2212 310q14-8 12 12" fill="none" stroke="#fff" strokeWidth="5" />
    <path d="M2216 212L2250 222" stroke="#efece6" strokeWidth="5" />
    <path d="M2103 42q-2-10 6-18" fill="none" stroke="#aaa" strokeWidth="3" />

    {/* boats and tunnels */}
    <g fill="none" stroke="#7a7cf0" strokeWidth="3" strokeDasharray="15 9">
      {ferries.map((d) => (
        <path key={d} d={d} />
      ))}
    </g>
    <path d="M2329 417Q2150 445 2076 474 2020 500 1962 535L1862 590" fill="none" stroke="#9a9a9a" strokeWidth="4" />
    <path d="M903 390Q950 400 985 430 1040 465 1100 445L1230 420M1938 780L1936 830 1916 866M1940 868V960L1952 1000M1898 870L1820 925" fill="none" stroke="#4040e8" strokeWidth="3" strokeDasharray="3 5" />
    <path d="M575 940L600 1000 620 1030M500 1045L640 1020 720 990 850 950" fill="none" stroke="#4040e8" strokeWidth="2" strokeDasharray="3 5" />

    {/* roads */}
    <Lines items={minor} casing="#cfcfcf" color="#fff" width={4} />
    <Lines items={secondary} casing="#c3c894" color="#f7fabf" width={8} />
    <Lines items={primary} casing="#d9a870" color="#fcd6a4" width={9} />
    <Lines items={motorway} casing="#7d5560" color="#e892a2" width={12} />
    <g fill="none" stroke="#777" strokeWidth="2">
      <path d="M1540 400L1560 450 1590 660M1614 440L1622 480 1642 500 1670 700 1706 742M1530 660L1836 610M1355 1090L1562 888 1706 742 1855 596 1870 610" />
    </g>
    <g fill="none" stroke="#666" strokeWidth="4">
      <path d="M494 1100L674 1092 782 1088 1016 1074 1020 1046 1110 1042 1125 1030 1220 1018 1228 1010M1390 968L1480 964M1450 966L1462 1100M1890 600L1912 650 1930 670 1932 800 1850 880 1830 900M1904 890L1910 896 1920 1100" />
      <path d="M1228 1010L1350 980M1818 822L1850 864 1885 890 1904 890" strokeDasharray="8 6" />
      <path d="M1800 925Q1780 950 1814 975" />
    </g>
    <path d="M1826 888L1850 862 1862 872 1836 900z" fill="#666" />
    {stationsOnLine.map(([x, y]) => (
      <rect key={`${x}-${y}`} x={x - 5} y={y - 5} width="11" height="11" fill="#7981b0" />
    ))}
    {triangles.map(([x, y]) => (
      <path key={`${x}-${y}`} d={`M${x} ${y - 8}l8 15h-16z`} fill="#d08f55" />
    ))}

    {/* labels */}
    <g stroke="rgba(255,255,255,0.6)" strokeWidth="3" paintOrder="stroke" strokeLinejoin="round">
      <g fontSize="20" fill="#8d6b4c">
        {peaks.map(([label, x, y]) => (
          <Peak key={`${x}-${y}`} label={label} x={x} y={y} />
        ))}
      </g>
      <g fontSize="20" fill="#b5304a" textAnchor="middle">
        {exits.map(([label, x, y]) => (
          <text key={`${x}-${y}`} x={x} y={y}>{label}</text>
        ))}
      </g>
      <g fontSize="17" fill="#222" textAnchor="middle">
        {streets.map(([label, x, y, turn]) => (
          <text key={label} x={x} y={y} transform={`rotate(${turn} ${x} ${y})`}>{label}</text>
        ))}
      </g>
      <g fontSize="22" textAnchor="middle" fill="#222">
        <text x="878" y="251">Golden</text>
        <text x="878" y="280">Gate Bridge</text>
        <g fill="#2f9050">
          <text x="1038" y="545">Presidio</text>
          <text x="834" y="961">Golden</text>
          <text x="834" y="993">Gate Park</text>
        </g>
        <g fill="#777" fontSize="20">
          <text x="2139" y="165">Treasure</text>
          <text x="2139" y="191">Island</text>
        </g>
      </g>
      <text x="1559" y="836" fontSize="30" fill="#333" textAnchor="middle">San Francisco</text>
    </g>
    <g fontSize="19" fill="#6b6df0">
      <text transform="translate(1264 -18) rotate(44)">San Francisco Pier 41</text>
      <text transform="translate(1366 -16) rotate(62)">Francisco Pier 41</text>
      <text transform="translate(1570 6) rotate(31)">Francisco Ferry Building</text>
      <text>
        <textPath href="#ferry33">Alcatraz - Pier 33 Alcatraz Landing</textPath>
      </text>
      <text transform="translate(1708 294) rotate(20)">Alameda Main Street - San Francisco Pier 41</text>
      <text transform="translate(2130 442) rotate(8)">Oakland Jack London</text>
      <text>
        <textPath href="#oakland">Oakland Jack London Square - San Francisco F</textPath>
      </text>
      <text transform="translate(2274 732) rotate(-62)">Alameda Main</text>
      <text transform="translate(2232 752) rotate(23)">Alameda Se</text>
      <text transform="translate(953 26) rotate(-22)" fill="#a06fc0">Marin C</text>
    </g>
    <Shield label="US 101" x={1411} y={488} w={92} tone="tan" />
    <Shield label="CA 1" x={913} y={699} w={67} />
    <Shield label="I 80" x={2001} y={543} w={67} />

    {pins.map(([kind, x, y]) => (
      <g key={`${x}-${y}`} transform={`translate(${x - (kind === 'truck' ? 42 : 26)} ${y - 62})`}>
        <PinShape kind={kind} />
      </g>
    ))}
  </MapCanvas>
);

/* ---------- page data ---------- */

const filters = [
  [SirenIcon, '(4/4)', 'green'],
  [AmbulanceIcon, '(0/0)', 'green'],
  [HandIcon, '(0/0)', 'red'],
  [EventIcon, '(0/0)', 'green'],
  [ClockIcon, '(0/0)', 'green'],
];

const missions = [
  { title: 'Back Pain', address: '2nd Street, 94114 San Francisco', pin: 'body', own: true, progress: 100, alert: 'Transport is needed!', patient: 'Austin U.', good: true },
  { title: 'Cardiac Arrest', address: 'Nob Hill Place, 94114 San Francisco', pin: 'body', progress: 100, patient: 'Gavin J.' },
  { title: 'Damaged Roof', address: '1188 Harrison Street, 94114 San Francisco', pin: 'crane', own: true, progress: 95, alert: 'Needed vehicles: 1 platform trucks.' },
  { title: 'Fallen person', address: '525 5th Street, 94114 San Francisco', pin: 'body', progress: 100, patient: 'María José W.' },
];

const stations = [
  { name: 'Ambulance', pin: 'cross', vehicles: [[5, 'ALS Ambulance']] },
  { name: 'Dispatch Center', pin: 'dispatch', vehicles: [] },
  { name: 'Federal Police', pin: 'police', vehicles: [[2, 'FBI Unit']] },
  { name: 'Fire station', pin: 'fire', vehicles: [[2, 'HazMat'], [2, 'Platform truck'], [1, 'Type 1 fire engine'], [2, 'Type 1 fire engine']] },
  { name: 'Helicopter station', pin: 'heli', vehicles: [] },
  { name: 'Hospital', pin: 'hospital', vehicles: [] },
  { name: '', pin: null, vehicles: [] },
];

const radio = [
  { code: 5, vehicle: 'ALS Ambulance', link: 'View Mission', text: 'Transport Request', request: true },
  { code: 4, vehicle: 'Type 1 fire engine', link: 'View Mission', text: 'On Scene' },
  { code: 1, vehicle: 'Type 1 fire engine', link: 'Fire station', text: 'Clear and Available' },
  { code: 2, vehicle: 'Type 1 fire engine', text: 'Available at Station' },
];

const arrows = Array.from({ length: 11 }, (_, i) => i);

const Mission = ({ mission }) => (
  <Card>
    <CardHeader>
      <Button>Dispatch</Button>
      {mission.own ? <PersonIcon /> : <AsteriskIcon />}
      <a href="#mission">
        {mission.title}, <Address>{mission.address}</Address>
      </a>
    </CardHeader>
    <CardBody>
      <CardPin>
        <PinIcon kind={mission.pin} w={28} />
      </CardPin>
      <div>
        <Track>
          <Fill style={{ width: `${mission.progress}%` }}>
            {mission.progress < 100 &&
              arrows.map((i) => (
                <Icon key={i} w={20} h={28} stroke="#8e2430" fill="#e58c90">
                  <path d="M18 2v24L2 14z" />
                </Icon>
              ))}
          </Fill>
        </Track>
        {mission.alert && <Alert>{mission.alert}</Alert>}
        {mission.patient && (
          <>
            <PatientName>{mission.patient}</PatientName>
            <Health $good={mission.good} />
          </>
        )}
      </div>
    </CardBody>
  </Card>
);

const App = () => (
  <Desktop>
    <GlobalStyle />
    <Window>
      <TitleBar>
        <AppIcon />
        <Title>Mission Chief</Title>
        <WindowButton aria-label="Minimize">
          <Icon w={22} h={22} stroke="#000"><path d="M1 11h20" /></Icon>
        </WindowButton>
        <WindowButton aria-label="Maximize">
          <Icon w={22} h={22} stroke="#000"><rect x="1" y="1" width="20" height="20" rx="2" /></Icon>
        </WindowButton>
        <WindowButton aria-label="Close">
          <Icon w={22} h={22} stroke="#000"><path d="M1 1l20 20M21 1L1 21" /></Icon>
        </WindowButton>
      </TitleBar>

      <Toolbar>
        <ToolButton>?</ToolButton>
        <ToolButton aria-label="Mail">
          <Icon w={22} h={18} stroke="#222"><rect x="1" y="1" width="20" height="16" rx="3" /><path d="M1 5l10 6 10-6" /></Icon>
        </ToolButton>
        <ToolButton $end aria-label="Reload">
          <Icon w={22} h={22} stroke="#222"><path d="M19 6a9 9 0 1 0 2 5M20 1v6h-6" /></Icon>
        </ToolButton>
      </Toolbar>

      <Nav>
        <Logo href="#home" aria-label="Home"><LogoIcon /></Logo>
        <LocationSearch placeholder="Location search" aria-label="Location search" />
        <NavItem href="#news" $active aria-label="News"><NewsIcon /></NavItem>
        <NavItem href="#profile" aria-label="Profile"><UserIcon /><Caret /></NavItem>
        <NavItem href="#alliance" aria-label="Alliance"><TreeIcon /><Caret /></NavItem>
        <NavItem href="#login"><CalendarIcon />Daily login</NavItem>
        <NavItem href="#credits"><CoinIcon />21,684</NavItem>
        <NavItem href="#coins"><CoinIcon dollar />262</NavItem>
        <NavItem href="#messages"><MailIcon /><CountBadge>1</CountBadge></NavItem>
        <NavItem href="#chat" aria-label="Chat"><BubbleIcon /></NavItem>
      </Nav>

      <Main>
        <MapFrame>
          <CityMap />
          <ZoomBox>
            <MapButton $size={61} aria-label="Zoom in">
              <Icon w={26} h={26} stroke="#000" sw={4}><path d="M13 2v22M2 13h22" /></Icon>
            </MapButton>
            <MapButton $size={61} aria-label="Zoom out">
              <Icon w={26} h={26} stroke="#000" sw={4}><path d="M2 13h22" /></Icon>
            </MapButton>
          </ZoomBox>
          <FullscreenBox>
            <MapButton $size={44} aria-label="Full screen"><FullscreenIcon /></MapButton>
          </FullscreenBox>
          <LayersBox>
            <MapButton $size={88} aria-label="Layers"><LayersIcon /></MapButton>
          </LayersBox>
          <Attribution>
            <a href="#leaflet">Leaflet</a> | © <a href="#osm">OpenStreetMap</a> contributors
          </Attribution>
        </MapFrame>

        <Missions>
          <MissionFilter>
            Mission
            <ButtonGroup>
              {filters.map(([FilterIcon, count, tone], i) => (
                <Button key={i} $tone={tone}>
                  <FilterIcon />
                  {count}
                </Button>
              ))}
            </ButtonGroup>
          </MissionFilter>
          <MissionSearch>
            <SearchIcon />
            <SearchInput aria-label="Search missions" />
          </MissionSearch>
          <MissionList>
            {missions.map((mission) => (
              <Mission key={mission.title} mission={mission} />
            ))}
          </MissionList>
          <ButtonGroup>
            <Button>Create a large scale alliance mission</Button>
            <Button>Start alliance event</Button>
          </ButtonGroup>
        </Missions>

        <Panel>
          <PanelHeader>
            Stations
            <ButtonGroup>
              <Button>New building</Button>
              <Button>Set a new POI</Button>
            </ButtonGroup>
          </PanelHeader>
          <PanelBody>
            <StationList>
              {stations.map((station) => (
                <React.Fragment key={station.name}>
                  <StationRow>
                    {station.pin && (
                      <>
                        <PinIcon kind={station.pin} w={30} />
                        <a href="#station">{station.name}</a>
                        <Button>Details</Button>
                      </>
                    )}
                  </StationRow>
                  {station.vehicles.length > 0 && (
                    <Vehicles>
                      {station.vehicles.map(([code, name], i) => (
                        <Vehicle key={i}>
                          <CrosshairIcon />
                          <Status $code={code}>{code}</Status>
                          <VehicleLabel href="#vehicle">{name}</VehicleLabel>
                        </Vehicle>
                      ))}
                    </Vehicles>
                  )}
                </React.Fragment>
              ))}
            </StationList>
          </PanelBody>
        </Panel>

        <Panel>
          <PanelHeader $spread>
            Chat
            <SoundButton aria-label="Sound"><SoundIcon /></SoundButton>
          </PanelHeader>
          <ChatBody>
            <InputGroup>
              <Addon htmlFor="message"><Required>*</Required> Message</Addon>
              <MessageInput id="message" />
            </InputGroup>
            <Button><BookIcon />Chat History</Button>
          </ChatBody>
        </Panel>

        <Panel>
          <PanelHeader $spread>
            Radio
            <Button $tone="red">Alliance Radio: Off</Button>
          </PanelHeader>
          <RadioBody>
            {radio.map((entry) => (
              <RadioRow key={entry.code} $request={entry.request}>
                <Status $code={entry.code}>{entry.code}</Status>
                <RadioTarget><CrosshairIcon /></RadioTarget>
                <Button>{entry.vehicle}</Button>
                {entry.link && <Button>{entry.link}</Button>}
                {entry.text}
              </RadioRow>
            ))}
          </RadioBody>
        </Panel>
      </Main>
    </Window>
  </Desktop>
);

export default App;
